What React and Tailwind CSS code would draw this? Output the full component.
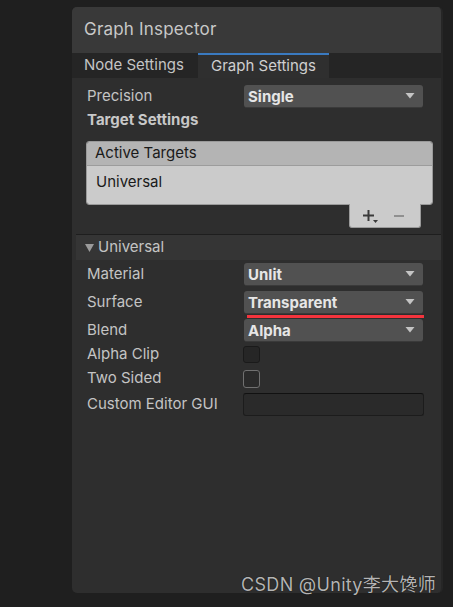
import React from 'react';

const font = { fontFamily: 'Inter, "Noto Sans", sans-serif' };

const Arrow = () => (
    <svg width="10" height="6" viewBox="0 0 10 6" className="shrink-0">
        <path d="M0.5 0 H9.5 L5 5.5 Z" fill="#c4c4c4" />
    </svg>
);

const Dropdown = ({ value }) => (
    <div className="w-[179px] h-[23px] rounded-[3px] bg-[#515151] border-b border-[#3a3a3a] flex items-center justify-between pl-[4px] pr-[8px]">
        <span className="text-[15px] font-bold text-[#e6e6e6] leading-none">{value}</span>
        <Arrow />
    </div>
);

const Label = ({ children }) => (
    <div className="w-[157px] text-[15px] text-[#c4c4c4] leading-none mt-[-3px]">{children}</div>
);

const Row = ({ label, children, className = '' }) => (
    <div className={`flex items-center ${className}`}>
        <Label>{label}</Label>
        {children}
    </div>
);

export default function App() {
    return (
        <div className="relative w-[453px] h-[607px] bg-[#1f1f1f] overflow-hidden" style={font}>
            <div className="ml-[72px] pt-[7px]">
                <div className="w-[371px] h-[586px] rounded-[5px] bg-[#2e2e2e] overflow-hidden border-r-2 border-[#262626]">
                    {/* Header */}
                    <div className="h-[46px] bg-[#393939] flex items-center pl-[12px] text-[17px] tracking-[0.2px] text-[#c8c8c8]">
                        Graph Inspector
                    </div>

                    {/* Tabs */}
                    <div className="h-[25px] bg-[#252525] flex">
                        <div className="w-[126px] pl-[12px] flex items-center text-[15px] text-[#c4c4c4]">
                            Node Settings
                        </div>
                        <div className="w-[131px] pl-[13px] flex items-center bg-[#2f2f2f] border-t-2 border-[#3a7ac0] text-[15px] text-[#d0d0d0]">
                            Graph Settings
                        </div>
                    </div>

                    {/* Graph settings */}
                    <div className="pl-[15px] pt-[7px]">
                        <Row label="Precision">
                            <Dropdown value="Single" />
                        </Row>
                        <div className="mt-[3px] h-[18px] flex items-center text-[15px] font-bold text-[#c8c8c8]">
                            Target Settings
                        </div>

                        {/* Active targets list */}
                        <div className="mt-[12px] ml-[-1px] w-[347px]">
                            <div className="rounded-[3px] overflow-hidden border border-[#9a9a9a]">
                                <div className="h-[24px] bg-[#b4b4b4] border-b border-[#9c9c9c] flex items-center pl-[8px] text-[15px] text-[#1a1a1a]">
                                    Active Targets
                                </div>
                                <div className="h-[38px] bg-[#cbcbcb] flex items-center pl-[9px] pb-[6px] text-[15px] text-[#1a1a1a]">
                                    Universal
                                </div>
                            </div>
                            <div className="flex justify-end pr-[12px] mt-[-1px]">
                                <div className="w-[72px] h-[24px] bg-[#cbcbcb] rounded-b-[3px] border border-t-0 border-[#9a9a9a] flex items-center pl-[13px] gap-[14px]">
                                    <div className="relative flex items-center">
                                        <svg width="11" height="11" viewBox="0 0 11 11">
                                            <path d="M5.5 0 V11 M0 5.5 H11" stroke="#3a3a3a" strokeWidth="2" />
                                        </svg>
                                        <svg width="5" height="3" viewBox="0 0 5 3" className="absolute left-[10px] top-[10px]">
                                            <path d="M0 0 H5 L2.5 3 Z" fill="#3a3a3a" />
                                        </svg>
                                    </div>
                                    <svg width="10" height="2" viewBox="0 0 10 2" className="ml-[6px]">
                                        <path d="M0 1 H10" stroke="#909090" strokeWidth="2" />
                                    </svg>
                                </div>
                            </div>
                        </div>
                    </div>

                    {/* Universal section */}
                    <div className="mt-[6px] border-t border-[#1e1e1e] ml-[4px]">
                        <div className="h-[25px] bg-[#353535] flex items-center pl-[9px] gap-[4px] text-[15px] text-[#c4c4c4]">
                            <svg width="9" height="8" viewBox="0 0 9 8">
                                <path d="M0 0 H9 L4.5 8 Z" fill="#9a9a9a" />
                            </svg>
                            Universal
                        </div>
                    </div>

                    <div className="pl-[15px] pt-[3px]">
                        <Row label="Material">
                            <Dropdown value="Unlit" />
                        </Row>
                        <Row label="Surface" className="mt-[5px]">
                            <div className="relative">
                                <Dropdown value="Transparent" />
                                <div className="absolute left-[3px] top-[24px] w-[177px] h-[3px] bg-[#f4343d]" />
                            </div>
                        </Row>
                        <Row label="Blend" className="mt-[5px]">
                            <Dropdown value="Alpha" />
                        </Row>
                        <Row label="Alpha Clip" className="mt-[4px] h-[17px]">
                            <div className="ml-[-1px] w-[17px] h-[17px] rounded-[3px] bg-[#262626] border border-[#1a1a1a]" />
                        </Row>
                        <Row label="Two Sided" className="mt-[7px] h-[18px]">
                            <div className="ml-[-1px] w-[17px] h-[18px] rounded-[3px] bg-[#2a2a2a] border border-[#707070]" />
                        </Row>
                        <Row label="Custom Editor GUI" className="mt-[5px] h-[23px]">
                            <div className="ml-[-1px] w-[181px] h-[23px] rounded-[3px] bg-[#2a2a2a] border border-[#1c1c1c] border-t-[#111111]" />
                        </Row>
                    </div>
                </div>
            </div>

            {/* Watermark */}
            <div
                className="absolute right-[17px] top-[576px] text-[18px] tracking-[0.3px] text-[#b4b4b4] leading-none"
                style={{ fontFamily: 'Inter, "Noto Sans CJK SC", sans-serif', textShadow: '0 0 1px #000' }}
            >
                CSDN @Unity李大馋师
            </div>
        </div>
    );
}
